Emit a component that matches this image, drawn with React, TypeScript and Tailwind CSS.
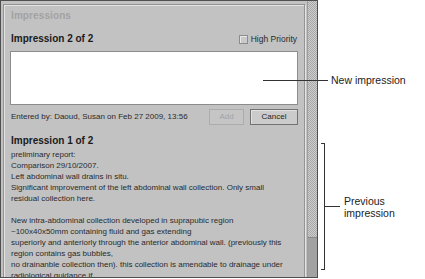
const bodyText = `preliminary report:
Comparison 29/10/2007.
Left abdominal wall drains in situ.
Significant improvement of the left abdominal wall collection. Only small
residual collection here.

New intra-abdominal collection developed in suprapubic region
~100x40x50mm containing fluid and gas extending
superiorly and anteriorly through the anterior abdominal wall. (previously this
region contains gas bubbles,
no drainanble collection then). this collection is amendable to drainage under
radiological guidance if`;

function Scrollbar() {
    return <div className="w-[10px] flex flex-col border-l border-[#9c9c9c]">
        <div className="flex-1 bg-[repeating-conic-gradient(#a9a9a9_0_25%,#cdcdcd_0_50%)] bg-[length:2px_2px]" />
        <div className="h-[40px] bg-[#a2a2a2] border-t border-[#8a8a8a]" />
    </div>
}

function ImpressionsPanel() {
    return <div className="w-[302px] border border-[#939393] shadow-[inset_1px_1px_0_#e4e4e4,1px_1px_0_#e4e4e4] px-[6px] pt-[5px] flex flex-col">
        <div className="pl-px text-[10px] leading-[12px] font-bold text-[#a2a2a2] tracking-[0.1px]">Impressions</div>

        <div className="mt-[11px] h-[12px] flex items-center">
            <span className="pl-px text-[10px] leading-[12px] font-bold text-[#1a1a1a]">Impression 2 of 2</span>
            <label className="ml-auto mr-px flex items-center gap-[3px] text-[8.5px] text-[#2a2a2a]">
                <span className="w-[9px] h-[9px] border border-[#8c8c8c] bg-[#cacaca] shadow-[inset_1px_1px_0_#e8e8e8]" />
                High Priority
            </label>
        </div>

        <div className="mt-[6px] h-[54px] bg-white border border-[#8c8c8c]" />

        <div className="mt-[4px] h-[16px] flex items-center gap-[6px]">
            <span className="pl-px text-[8px] text-[#2a2a2a]">Entered by: Daoud, Susan on Feb 27 2009, 13:56</span>
            <button className="ml-auto w-[35px] h-[16px] border border-[#acacac] bg-[#c5c5c5] text-[8px] text-[#a3a3a3]">Add</button>
            <button className="w-[48px] h-[16px] border border-[#727272] bg-[#cbcbcb] shadow-[inset_1px_1px_0_#e2e2e2] text-[8px] text-[#1e1e1e]">Cancel</button>
        </div>

        <div className="mt-[10px] pl-px text-[10px] leading-[12px] font-bold text-[#1a1a1a]">Impression 1 of 2</div>
        <div className="mt-[2px] pl-px text-[8px] leading-[11px] text-[#2a2a2a] whitespace-pre-line">{bodyText}</div>
    </div>
}

export default function App() {
    return <div className="relative w-[425px] h-[279px] bg-white font-['Liberation_Sans',Arial,sans-serif]">
        <div className="w-[318px] h-[278px] border border-[#4f4f4f] bg-[#c2c2c2] flex overflow-hidden">
            <div className="w-[306px] pl-[2px] pt-[3px] overflow-hidden">
                <ImpressionsPanel />
            </div>
            <Scrollbar />
        </div>

        {/* callouts */}
        <div className="absolute left-[263px] top-[74px] flex items-center gap-[3px]">
            <div className="w-[65px] h-px bg-[#333]" />
            <span className="text-[10.5px] leading-[12px] text-[#222]">New impression</span>
        </div>
        <div className="absolute left-[321px] top-[143px] flex items-center">
            <div className="w-[4px] h-[127px] border-t border-r border-b border-[#333]" />
            <div className="w-[15px] h-px bg-[#333]" />
            <span className="ml-[4px] text-[10.5px] leading-[12px] text-[#222]">Previous<br />impression</span>
        </div>
    </div>
}
